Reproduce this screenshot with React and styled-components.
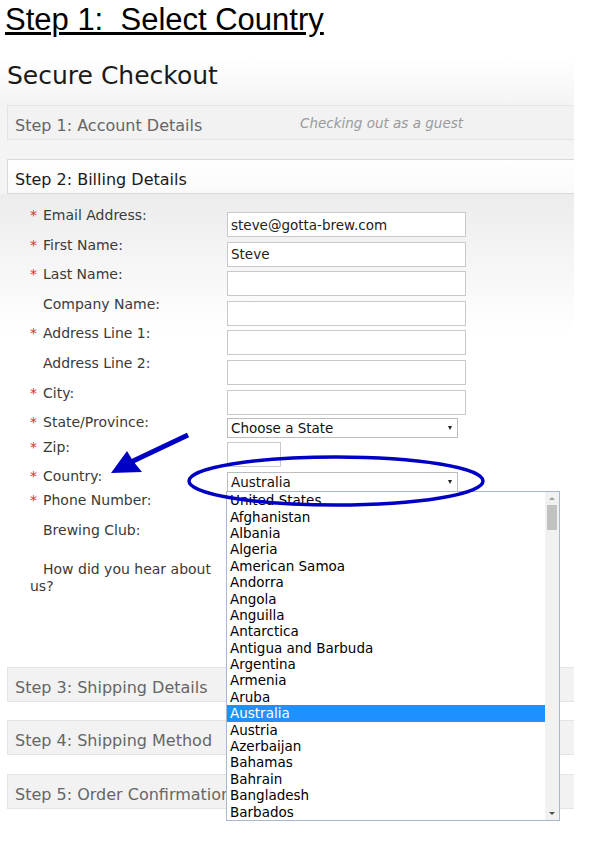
import styled, { createGlobalStyle } from "styled-components";

const GlobalStyle = createGlobalStyle`
  html, body {
    margin: 0;
    padding: 0;
    background: #fff;
  }
  body {
    font-family: "DejaVu Sans", Verdana, sans-serif;
  }
`;

const Page = styled.div`
  position: relative;
  width: 593px;
  height: 846px;
  overflow: hidden;
  background: #fff;
`;

const Heading = styled.h1`
  margin: 0;
  padding: 3px 0 0 5px;
  font: 400 31px/34px "Liberation Sans", Arial, sans-serif;
  text-decoration: underline;
  white-space: pre;
  color: #000;
`;

const Checkout = styled.div`
  width: 574px;
  margin-top: 21px;
  background: linear-gradient(#fff 0, #f4f4f4 45px, #f4f4f4 136px, #fff 136px);
`;

const PageTitle = styled.h2`
  margin: 0 0 14px;
  padding: 3px 0 0 7px;
  font: 400 25px/30px "DejaVu Sans", sans-serif;
  color: #1a1a1a;
`;

const StepBar = styled.div`
  display: flex;
  align-items: center;
  box-sizing: border-box;
  height: 35px;
  margin: ${(p) => p.$mt || 0}px 0 0 7px;
  padding: 5px 0 0 7px;
  border: 1px solid ${(p) => (p.$active ? "#d9d9d9" : "#e4e4e4")};
  border-right: none;
  background: ${(p) => (p.$active ? "linear-gradient(#fff, #f9f9f9)" : "#f2f2f2")};
  font-size: 16px;
  color: ${(p) => (p.$active ? "#1a1a1a" : "#666")};
  white-space: nowrap;
`;

const StepName = styled.span`
  flex: 0 0 285px;
`;

const Note = styled.span`
  margin-bottom: 4px;
  font-size: 13.5px;
  font-style: italic;
  color: #9a9a9a;
`;

const Billing = styled.div`
  padding: 8px 0 59px 30px;
  background: linear-gradient(#ececec, #fff 140px);
`;

const Row = styled.div`
  display: flex;
  align-items: flex-start;
  height: ${(p) => p.$h}px;
`;

const Label = styled.label`
  flex: 0 0 197px;
  margin-top: 5px;
  font-size: 14px;
  line-height: 17px;
  color: #3a3a3a;
`;

const Req = styled.span`
  display: inline-block;
  width: 13px;
  color: #e02b2b;
`;

const Field = styled.div`
  position: relative;
  margin-top: ${(p) => p.$mt || 0}px;
`;

const TextInput = styled.input`
  display: block;
  box-sizing: border-box;
  width: ${(p) => p.$w || 239}px;
  height: 25px;
  margin: 0;
  padding: 0 3px;
  border: 1px solid #c9c9c9;
  background: #fff;
  font: 13.5px "DejaVu Sans", sans-serif;
  color: #222;
  outline: none;
`;

const SelectBox = styled.div`
  display: flex;
  align-items: center;
  justify-content: space-between;
  box-sizing: border-box;
  width: 231px;
  height: 20px;
  padding: 0 5px 0 3px;
  border: 1px solid #bcbcbc;
  background: #fff;
  font-size: 13.5px;
  color: #111;
`;

const Caret = styled.span`
  width: 0;
  height: 0;
  border-left: 2.5px solid transparent;
  border-right: 2.5px solid transparent;
  border-top: 4px solid #222;
`;

const ListBox = styled.div`
  position: absolute;
  top: 19px;
  left: -1px;
  z-index: 2;
  display: flex;
  box-sizing: border-box;
  width: 334px;
  height: 330px;
  border: 1px solid #a9b8cc;
  background: #fff;
`;

const Options = styled.div`
  flex: 1;
  overflow: hidden;
`;

const Option = styled.div`
  height: 16.4px;
  padding-left: 3px;
  font-size: 13.5px;
  line-height: 16.4px;
  white-space: nowrap;
  background: ${(p) => (p.$selected ? "#1e90ff" : "transparent")};
  color: ${(p) => (p.$selected ? "#fff" : "#000")};
`;

const Scrollbar = styled.div`
  position: relative;
  flex: 0 0 14px;
  background: #f1f1f1;
`;

const Thumb = styled.div`
  position: absolute;
  top: 13px;
  left: 2px;
  width: 10px;
  height: 25px;
  background: #c1c1c1;
`;

const ScrollArrow = styled.span`
  position: absolute;
  left: 4px;
  ${(p) => (p.$down ? "bottom: 5px;" : "top: 5px;")}
  width: 0;
  height: 0;
  border-left: 3px solid transparent;
  border-right: 3px solid transparent;
  ${(p) => (p.$down ? "border-top: 3px solid #505050;" : "border-bottom: 3px solid #a3a3a3;")}
`;

const Annotation = styled.svg`
  position: absolute;
  left: 0;
  top: 0;
  z-index: 5;
  pointer-events: none;
`;

const countries = [
  "United States",
  "Afghanistan",
  "Albania",
  "Algeria",
  "American Samoa",
  "Andorra",
  "Angola",
  "Anguilla",
  "Antarctica",
  "Antigua and Barbuda",
  "Argentina",
  "Armenia",
  "Aruba",
  "Australia",
  "Austria",
  "Azerbaijan",
  "Bahamas",
  "Bahrain",
  "Bangladesh",
  "Barbados",
];

const textRows = [
  { label: "Email Address:", req: true, value: "steve@gotta-brew.com" },
  { label: "First Name:", req: true, value: "Steve" },
  { label: "Last Name:", req: true, value: "" },
  { label: "Company Name:", req: false, value: "" },
  { label: "Address Line 1:", req: true, value: "" },
  { label: "Address Line 2:", req: false, value: "" },
  { label: "City:", req: true, value: "" },
];

const FormLabel = ({ req, children }) => (
  <Label>
    <Req>{req ? "*" : ""}</Req>
    {children}
  </Label>
);

const App = () => {
  return (
    <Page>
      <GlobalStyle />
      <Heading>Step 1:  Select Country</Heading>
      <Checkout>
        <PageTitle>Secure Checkout</PageTitle>
        <StepBar>
          <StepName>Step 1: Account Details</StepName>
          <Note>Checking out as a guest</Note>
        </StepBar>
        <StepBar $mt={19} $active>
          Step 2: Billing Details
        </StepBar>
        <Billing>
          {textRows.map((r) => (
            <Row key={r.label} $h={29.6}>
              <FormLabel req={r.req}>{r.label}</FormLabel>
              <Field $mt={10}>
                <TextInput defaultValue={r.value} />
              </Field>
            </Row>
          ))}
          <Row $h={24.5}>
            <FormLabel req>State/Province:</FormLabel>
            <Field $mt={9}>
              <SelectBox>
                Choose a State
                <Caret />
              </SelectBox>
            </Field>
          </Row>
          <Row $h={29.5}>
            <FormLabel req>Zip:</FormLabel>
            <Field $mt={8.5}>
              <TextInput $w={54} />
            </Field>
          </Row>
          <Row $h={24}>
            <FormLabel req>Country:</FormLabel>
            <Field $mt={9}>
              <SelectBox>
                Australia
                <Caret />
              </SelectBox>
              <ListBox>
                <Options>
                  {countries.map((c) => (
                    <Option key={c} $selected={c === "Australia"}>
                      {c}
                    </Option>
                  ))}
                </Options>
                <Scrollbar>
                  <ScrollArrow />
                  <Thumb />
                  <ScrollArrow $down />
                </Scrollbar>
              </ListBox>
            </Field>
          </Row>
          <Row $h={30}>
            <FormLabel req>Phone Number:</FormLabel>
          </Row>
          <Row $h={39}>
            <FormLabel>Brewing Club:</FormLabel>
          </Row>
          <Row $h={34}>
            <FormLabel>How did you hear about us?</FormLabel>
          </Row>
        </Billing>
        <StepBar $mt={18}>Step 3: Shipping Details</StepBar>
        <StepBar $mt={18}>Step 4: Shipping Method</StepBar>
        <StepBar $mt={19}>Step 5: Order Confirmation</StepBar>
      </Checkout>
      <Annotation width="593" height="846" viewBox="0 0 593 846">
        <line x1="188" y1="435" x2="131" y2="462" stroke="#0000c4" strokeWidth="5" />
        <polygon points="111,473 127,451 133,461 142,472" fill="#0000c4" />
        <ellipse cx="336" cy="481" rx="147" ry="24" fill="none" stroke="#0000c4" strokeWidth="3.5" />
      </Annotation>
    </Page>
  );
};

export default App;
